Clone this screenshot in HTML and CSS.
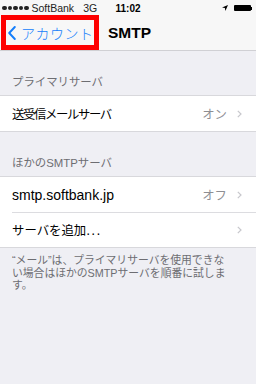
FILE: index.html
```html
<!DOCTYPE html>
<html lang="ja">
<head>
<meta charset="utf-8">
<link rel="stylesheet" href="styles.css">
</head>
<body>
<div class="screen">
  <div class="status">
    <div class="st-left">
      <span class="dots"><i></i><i></i><i></i><i></i><i></i></span>
      <span class="carrier">SoftBank</span>
      <span class="net">3G</span>
    </div>
    <div class="st-time">11:02</div>
    <div class="st-right">
      <svg class="loc" width="6" height="6" viewBox="0 0 6 6"><path d="M6 0 L0 2.6 L2.9 3.1 L3.4 6 Z" fill="#000"/></svg>
      <span class="battery"></span><span class="nub"></span>
    </div>
  </div>
  <div class="nav">
    <div class="back">
      <svg class="chev" width="8" height="14" viewBox="0 0 8 14"><path d="M6.8 1 L1.2 7 L6.8 13" fill="none" stroke="#147efb" stroke-width="1.9" stroke-linecap="round" stroke-linejoin="round"/></svg>
      <span class="back-label">アカウント</span>
    </div>
    <div class="title">SMTP</div>
    <div class="highlight"></div>
  </div>
  <div class="content">
    <div class="sec-header">プライマリサーバ</div>
    <div class="group">
      <div class="row">
        <span class="label ja tight">送受信メールサーバ</span>
        <span class="value">オン</span>
        <svg class="disc" width="5" height="8" viewBox="0 0 5 8"><path d="M0.8 0.8 L4 4 L0.8 7.2" fill="none" stroke="#c7c7cc" stroke-width="1.2"/></svg>
      </div>
    </div>
    <div class="sec-header">ほかのSMTPサーバ</div>
    <div class="group">
      <div class="row">
        <span class="label">smtp.softbank.jp</span>
        <span class="value">オフ</span>
        <svg class="disc" width="5" height="8" viewBox="0 0 5 8"><path d="M0.8 0.8 L4 4 L0.8 7.2" fill="none" stroke="#c7c7cc" stroke-width="1.2"/></svg>
      </div>
      <div class="row">
        <span class="label ja">サーバを追加<span class="ell">...</span></span>
        <span class="value"></span>
        <svg class="disc" width="5" height="8" viewBox="0 0 5 8"><path d="M0.8 0.8 L4 4 L0.8 7.2" fill="none" stroke="#c7c7cc" stroke-width="1.2"/></svg>
      </div>
    </div>
    <div class="sec-footer">“メール”は、プライマリサーバを使用できない場合はほかのSMTPサーバを順番に試します。</div>
  </div>
</div>
</body>
</html>
```
FILE: styles.css
```css
* { box-sizing: border-box; margin: 0; padding: 0; }
html, body { width: 256px; height: 384px; overflow: hidden; }
body {
  background: #efeff4;
  font-family: "Liberation Sans", "Noto Sans CJK JP", sans-serif;
  color: #000;
}
.screen { width: 256px; height: 384px; display: flex; flex-direction: column; }

.status {
  height: 16px;
  background: #f7f7f7;
  display: flex;
  align-items: center;
  padding: 0 4px 0 2px;
  font-size: 10.5px;
  position: relative;
}
.st-left { display: flex; align-items: center; gap: 3px; flex: 1; }
.dots { display: flex; gap: 1px; }
.dots i { width: 4.5px; height: 4.5px; border-radius: 50%; background: #222; display: block; }
.carrier { color: #222; }
.net { margin-left: 6px; color: #222; }
.st-time { position: absolute; left: 0; right: 0; text-align: center; font-weight: bold; font-size: 10px; pointer-events: none; }
.st-right { display: flex; align-items: center; }
.loc { margin-right: 6px; }
.battery { width: 17px; height: 6px; background: #000; border-radius: 1px; display: block; }
.nub { width: 1.5px; height: 3px; background: #000; display: block; }

.nav {
  height: 35px;
  background: #f7f7f7;
  border-bottom: 1px solid #d0d0d4;
  display: flex;
  align-items: center;
  position: relative;
}
.back { display: flex; align-items: center; padding-left: 8px; width: 108px; }
.chev { margin-right: 5px; }
.back-label { color: #147efb; font-size: 14px; font-family: "Noto Sans CJK JP", sans-serif; letter-spacing: 0.5px; font-weight: 300; }
.title { font-weight: bold; font-size: 15.5px; }
.highlight {
  position: absolute;
  left: 1px;
  top: -1px;
  width: 98px;
  height: 35px;
  border: 5px solid #fe0000;
}

.content { flex: 1; }
.sec-header {
  height: 44px;
  padding: 0 12px 6px;
  display: flex;
  align-items: flex-end;
  font-size: 11.4px;
  color: #6d6d72;
}
.group {
  background: #fff;
  border-top: 1px solid #d8d8dc;
  border-bottom: 1px solid #d8d8dc;
}
.row {
  height: 35px;
  margin-left: 12px;
  padding-right: 14px;
  display: flex;
  align-items: center;
  font-size: 14px;
}
.row + .row { border-top: 1px solid #dcdce0; }
.label { flex: 1; }
.label.ja {
  font-family: "Noto Sans CJK JP", sans-serif;
  font-size: 12.4px;
}
.label.tight { letter-spacing: -1.4px; }
.ell { font-family: "Liberation Sans", sans-serif; font-size: 14px; letter-spacing: 1.2px; }
.value {
  color: #8e8e93;
  font-family: "Noto Sans CJK JP", sans-serif;
  font-size: 12.4px;
  margin-right: 10px;
}
.disc { display: block; }
.sec-footer {
  padding: 6px 22px 0 12px;
  font-size: 10.8px;
  line-height: 12.5px;
  color: #6d6d72;
}
```
